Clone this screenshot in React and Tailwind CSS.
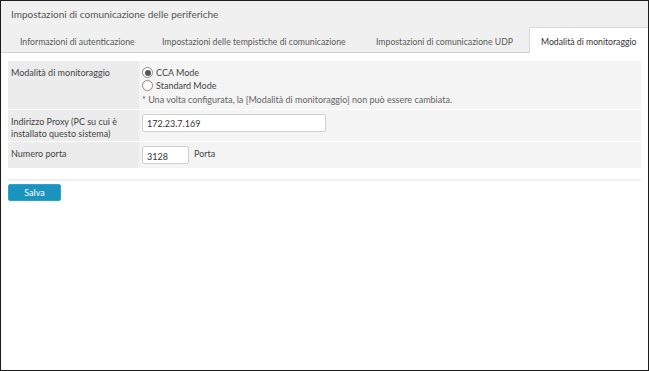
import { useState } from 'react';

const tabs = [
  { label: 'Informazioni di autenticazione', cls: 'w-[148px] pl-[19px]' },
  { label: 'Impostazioni delle tempistiche di comunicazione', cls: 'w-[215px] pl-[13px]' },
  { label: 'Impostazioni di comunicazione UDP', cls: 'w-[165px] pl-[12px]' },
];

function Radio({ checked, label, onClick }) {
  return (
    <label className="flex items-center gap-[3px] h-[13px] cursor-pointer" onClick={onClick}>
      <span className="w-[11px] h-[11px] rounded-full border border-[#8a8a8a] bg-white flex items-center justify-center">
        {checked && <span className="w-[6px] h-[6px] rounded-full bg-[#555]" />}
      </span>
      <span>{label}</span>
    </label>
  );
}

export default function App() {
  const [mode, setMode] = useState('cca');
  const [proxy, setProxy] = useState('172.23.7.169');
  const [port, setPort] = useState('3128');

  return (
    <div
      className="w-[649px] h-[371px] border border-[#1c1c1c] bg-white text-[9px] text-[#444] overflow-hidden"
      style={{ fontFamily: 'Lato, "Open Sans", sans-serif' }}
    >
      <div className="bg-[#f0f0f0]">
        <div className="h-[26px] pl-[10px] pt-[6px] text-[10px] text-[#555] whitespace-nowrap">
          Impostazioni di comunicazione delle periferiche
        </div>
        <div className="flex h-[26px] whitespace-nowrap text-[8.7px]">
          {tabs.map((t) => (
            <div key={t.label} className={`shrink-0 border-b border-[#cfcfcf] pt-[8px] text-[#5a5a5a] ${t.cls}`}>
              {t.label}
            </div>
          ))}
          <div className="flex-1 bg-white border-l border-t border-[#d8d8d8] rounded-tl-[2px] pl-[11px] pt-[7px] text-[#333]">
            Modalità di monitoraggio
          </div>
        </div>
      </div>

      <div className="px-[7px] pt-[8px]">
        <div className="grid grid-cols-[131px_1fr] gap-y-[1px] bg-white">
          <div className="bg-[#ececec] pl-[3px] pt-[5px] h-[48px]">Modalità di monitoraggio</div>
          <div className="bg-[#f4f4f4] pl-[3px] pt-[5px]">
            <Radio checked={mode === 'cca'} label="CCA Mode" onClick={() => setMode('cca')} />
            <Radio checked={mode === 'std'} label="Standard Mode" onClick={() => setMode('std')} />
            <div className="text-[#666] mt-[1px]">
              * Una volta configurata, la [Modalità di monitoraggio] non può essere cambiata.
            </div>
          </div>

          <div className="bg-[#ececec] pl-[3px] pt-[6px] h-[31px] leading-[12px]">
            Indirizzo Proxy (PC su cui è
            <br />
            installato questo sistema)
          </div>
          <div className="bg-[#f4f4f4] pl-[3px] pt-[4px]">
            <input
              value={proxy}
              onChange={(e) => setProxy(e.target.value)}
              className="w-[184px] h-[18px] border border-[#cfcfcf] rounded-[2px] bg-white px-[4px] text-[9px] text-[#333] outline-none"
            />
          </div>

          <div className="bg-[#ececec] pl-[3px] pt-[5px] h-[26px]">Numero porta</div>
          <div className="bg-[#f4f4f4] pl-[3px] pt-[4px] flex items-start gap-[5px]">
            <input
              value={port}
              onChange={(e) => setPort(e.target.value)}
              className="w-[47px] h-[18px] border border-[#cfcfcf] rounded-[2px] bg-white px-[4px] pt-[2px] text-[9px] text-[#333] outline-none"
            />
            <span className="pt-[1px]">Porta</span>
          </div>
        </div>

        <div className="mt-[11px] h-[2px] bg-[#f0f0f0]" />

        <button className="mt-[3px] w-[53px] h-[17px] rounded-[2px] bg-[#1b93bf] border border-[#2aa5cf] text-white text-[9px]">
          Salva
        </button>
      </div>
    </div>
  );
}
